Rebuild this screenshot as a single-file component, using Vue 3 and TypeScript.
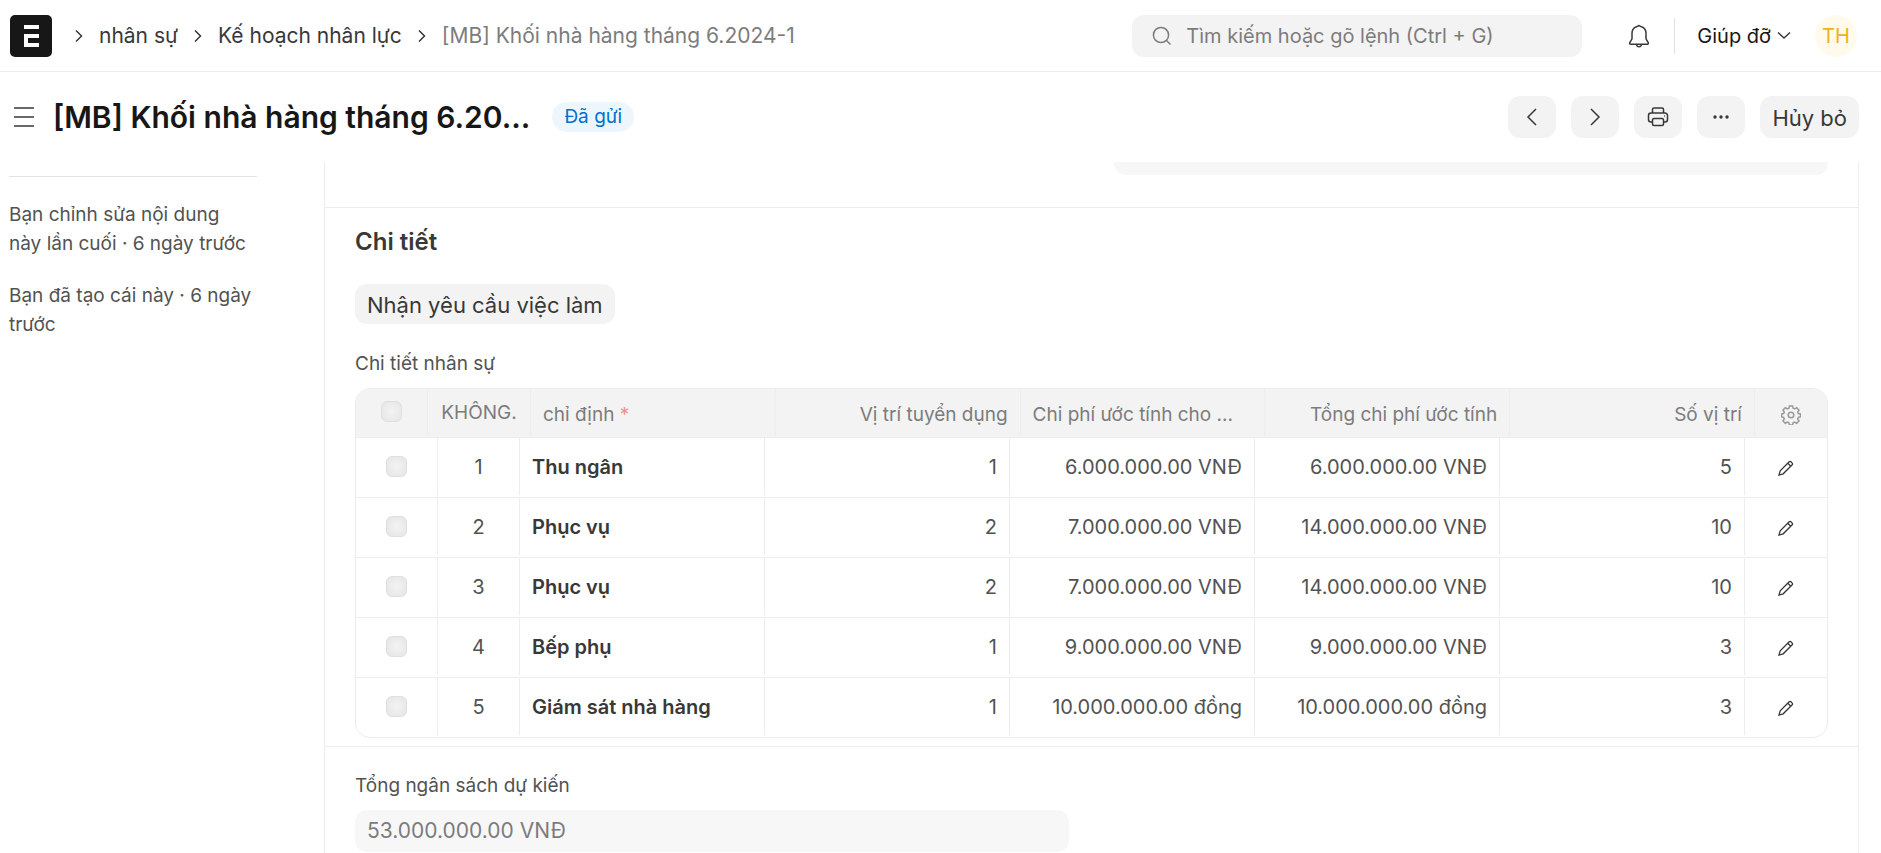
<script setup lang="ts">
interface Row {
  name: string
  vacancies: number
  cost: string
  total: string
  positions: number
}

const rows: Row[] = [
  { name: 'Thu ngân', vacancies: 1, cost: '6.000.000.00 VNĐ', total: '6.000.000.00 VNĐ', positions: 5 },
  { name: 'Phục vụ', vacancies: 2, cost: '7.000.000.00 VNĐ', total: '14.000.000.00 VNĐ', positions: 10 },
  { name: 'Phục vụ', vacancies: 2, cost: '7.000.000.00 VNĐ', total: '14.000.000.00 VNĐ', positions: 10 },
  { name: 'Bếp phụ', vacancies: 1, cost: '9.000.000.00 VNĐ', total: '9.000.000.00 VNĐ', positions: 3 },
  { name: 'Giám sát nhà hàng', vacancies: 1, cost: '10.000.000.00 đồng', total: '10.000.000.00 đồng', positions: 3 },
]
</script>

<template>
  <div class="page">
    <header class="navbar">
      <a class="logo" href="#" aria-label="ERPNext">
        <svg width="42" height="42" viewBox="0 0 42 42">
          <rect width="42" height="42" rx="5" fill="#171717" />
          <path d="M14 10h15v4H14zM14 19h15v4H18v5h11v4H14z" fill="#fff" />
        </svg>
      </a>
      <nav class="crumbs" aria-label="Breadcrumb">
        <svg class="sep" width="8" height="14" viewBox="0 0 8 14"><path d="M1 1.500 6.500 7 1 12.500" /></svg>
        <a href="#">nhân sự</a>
        <svg class="sep" width="8" height="14" viewBox="0 0 8 14"><path d="M1 1.500 6.500 7 1 12.500" /></svg>
        <a href="#">Kế hoạch nhân lực</a>
        <svg class="sep" width="8" height="14" viewBox="0 0 8 14"><path d="M1 1.500 6.500 7 1 12.500" /></svg>
        <a href="#" class="current">[MB] Khối nhà hàng tháng 6.2024-1</a>
      </nav>
      <div class="search">
        <svg width="20" height="20" viewBox="0 0 20 20"><circle cx="9" cy="9" r="7.600" /><path d="m14.500 14.500 4 4" /></svg>
        <input type="text" aria-label="Tìm kiếm" placeholder="Tìm kiếm hoặc gõ lệnh (Ctrl + G)" />
      </div>
      <button class="plain bell" aria-label="Thông báo">
        <svg width="24" height="26" viewBox="0 0 24 26">
          <path d="M12 2.500 9.500 3.800C6.500 4.800 5 7.200 5 10.500v5.300L2.800 19.600q-.6 1.600 1 1.600h16.400q1.600 0 1-1.600L19 15.800v-5.300c0-3.300-1.500-5.700-4.500-6.700Z" />
          <path d="M9.500 21.500c.5 3 4.500 3 5 0" />
        </svg>
      </button>
      <span class="divider"></span>
      <button class="plain help">
        Giúp đỡ
        <svg width="14" height="9" viewBox="0 0 14 9"><path d="m1 1.500 6 5.500 6-5.500" /></svg>
      </button>
      <button class="avatar">TH</button>
    </header>

    <div class="titlebar">
      <button class="plain menu" aria-label="Menu">
        <svg width="22" height="22" viewBox="0 0 22 22"><path d="M1 2h20M1 11h20M1 20h20" /></svg>
      </button>
      <h1>[MB] Khối nhà hàng tháng 6.20...</h1>
      <span class="status">Đã gửi</span>
      <div class="actions">
        <button class="btn icon" aria-label="Trước"><svg width="24" height="24" viewBox="0 0 24 24"><path d="m16 4-8 8 8 8" /></svg></button>
        <button class="btn icon" aria-label="Sau"><svg width="24" height="24" viewBox="0 0 24 24"><path d="m8 4 8 8-8 8" /></svg></button>
        <button class="btn icon" aria-label="In">
          <svg width="24" height="24" viewBox="0 0 24 24">
            <path d="M6.500 8V4.500a1.500 1.500 0 0 1 1.500-1.500h8a1.500 1.500 0 0 1 1.500 1.500V8M6.500 17H5a2.500 2.500 0 0 1-2.500-2.500v-4A2.500 2.500 0 0 1 5 8h14a2.500 2.500 0 0 1 2.500 2.500v4A2.500 2.500 0 0 1 19 17h-1.500" />
            <rect x="6.500" y="13.500" width="11" height="7" rx="1.500" /><path d="M18 11h.8" />
          </svg>
        </button>
        <button class="btn icon" aria-label="Thêm">
          <svg width="24" height="24" viewBox="0 0 24 24"><g class="dots"><circle cx="6" cy="12" r="1.700" /><circle cx="12" cy="12" r="1.700" /><circle cx="18" cy="12" r="1.700" /></g></svg>
        </button>
        <button class="btn text">Hủy bỏ</button>
      </div>
    </div>

    <div class="body">
      <aside>
        <hr />
        <p>Bạn chỉnh sửa nội dung này lần cuối · 6 ngày trước</p>
        <p>Bạn đã tạo cái này · 6 ngày trước</p>
      </aside>
      <main>
        <section class="cut"><div class="cut-field"></div></section>
        <section class="details">
          <h2>Chi tiết</h2>
          <button class="btn text get">Nhận yêu cầu việc làm</button>
          <div class="label" id="grid-label">Chi tiết nhân sự</div>
          <table aria-labelledby="grid-label">
            <thead>
              <tr>
                <th class="check"><input type="checkbox" aria-label="Chọn tất cả" /></th>
                <th class="no">KHÔNG.</th>
                <th>chỉ định <span class="req">*</span></th>
                <th class="num">Vị trí tuyển dụng</th>
                <th>Chi phí ước tính cho ...</th>
                <th class="num">Tổng chi phí ước tính</th>
                <th class="num">Số vị trí</th>
                <th class="tool">
                  <button class="plain" aria-label="Cấu hình cột">
                    <svg class="gear" width="20" height="20" viewBox="0 0 20 20">
                      <path d="M8.400 1h3.200l.5 2.300 1.600.7 2-1.300 2.300 2.300-1.300 2 .7 1.500 2.100.5v2.800l-2.100.6-.7 1.600 1.300 2-2.300 2.300-2-1.300-1.600.7-.5 2.300H8.400l-.5-2.300-1.600-.7-2 1.300L2 16l1.300-2-.7-1.600L.500 11.800V9l2.100-.5L3.300 7 2 5l2.300-2.300 2 1.300 1.600-.7Z" />
                      <circle cx="10" cy="10" r="2.800" />
                    </svg>
                  </button>
                </th>
              </tr>
            </thead>
            <tbody>
              <tr v-for="(row, i) in rows" :key="i">
                <td class="check"><input type="checkbox" :aria-label="`Chọn dòng ${i + 1}`" /></td>
                <td class="no">{{ i + 1 }}</td>
                <td class="name">{{ row.name }}</td>
                <td class="num">{{ row.vacancies }}</td>
                <td class="num">{{ row.cost }}</td>
                <td class="num">{{ row.total }}</td>
                <td class="num">{{ row.positions }}</td>
                <td class="tool">
                  <button class="plain" :aria-label="`Sửa dòng ${i + 1}`">
                    <svg class="pencil" width="16" height="16" viewBox="0 0 16 16">
                      <path d="M1 15 2.200 10.800 11.200 1.800a1.200 1.200 0 0 1 1.700 0l1.300 1.300a1.200 1.200 0 0 1 0 1.700L5.200 13.800ZM9.800 3.200l3 3" />
                    </svg>
                  </button>
                </td>
              </tr>
            </tbody>
          </table>
        </section>
        <section class="budget">
          <label class="label" for="budget">Tổng ngân sách dự kiến</label>
          <input id="budget" type="text" readonly value="53.000.000.00 VNĐ" />
        </section>
      </main>
    </div>
  </div>
</template>

<style>
body {
  margin: 0;
  background: #fff;
}
</style>

<style scoped>
* {
  box-sizing: border-box;
}
.page {
  height: 100vh;
  display: flex;
  flex-direction: column;
  overflow: hidden;
  font-family: Inter, "Noto Sans", sans-serif;
  font-size: 20px;
  line-height: 28px;
  color: #383838;
}
button,
input {
  font: inherit;
  color: inherit;
  border: 0;
  margin: 0;
}
button {
  cursor: pointer;
}
a {
  color: inherit;
  text-decoration: none;
}
svg {
  display: block;
  fill: none;
  stroke: #383838;
  stroke-width: 1.5;
}
.logo svg {
  stroke: none;
}
.plain {
  background: none;
  padding: 0;
}
.navbar {
  display: flex;
  align-items: center;
  flex: none;
  height: 72px;
  padding: 0 24px 0 10px;
  border-bottom: 1px solid #ededed;
}
.crumbs {
  display: flex;
  align-items: center;
  gap: 16px;
  margin: 0 auto 0 23px;
  font-size: 21px;
}
.current {
  color: #7c7c7c;
}
.search {
  display: flex;
  align-items: center;
  gap: 14px;
  width: 450px;
  height: 42px;
  padding: 0 20px;
  border-radius: 12px;
  background: #f3f3f3;
}
.search svg {
  stroke: #7c7c7c;
}
.search input {
  flex: 1;
  min-width: 0;
  padding: 0;
  background: none;
  outline: none;
}
.search input::placeholder {
  color: #7c7c7c;
  opacity: 1;
}
.bell {
  margin-left: 45px;
}
.divider {
  width: 1px;
  height: 36px;
  margin: 0 22px 0 23px;
  background: #e2e2e2;
}
.help {
  display: flex;
  align-items: center;
  gap: 6px;
  color: #171717;
}
.avatar {
  width: 42px;
  height: 42px;
  margin-left: 24px;
  padding: 0;
  border-radius: 50%;
  background: #fffaeb;
  color: #edb21d;
}
.titlebar {
  display: flex;
  align-items: center;
  flex: none;
  height: 90px;
  padding: 0 22px 0 13px;
}
h1 {
  min-width: 474px;
  margin: 0 22px 0 18px;
  white-space: nowrap;
  font-size: 30px;
  line-height: 40px;
  font-weight: 600;
  color: #171717;
}
.status {
  padding: 0 12px;
  height: 30px;
  border-radius: 15px;
  background: #edf6fd;
  color: #0070cc;
  font-size: 19px;
  line-height: 30px;
}
.actions {
  display: flex;
  gap: 15px;
  margin-left: auto;
}
.btn {
  height: 42px;
  padding: 0 12px;
  border-radius: 12px;
  background: #f3f3f3;
  font-size: 22px;
}
.btn.text {
  padding-top: 2px;
}
.dots {
  fill: #383838;
  stroke: none;
}
.body {
  flex: 1;
  min-height: 0;
  display: flex;
  padding-right: 22px;
}
aside {
  width: 324px;
  flex: none;
  padding: 14px 67px 0 9px;
  font-size: 19px;
  line-height: 29px;
  color: #525252;
}
hr {
  margin: 0 0 23px;
  border: 0;
  border-top: 1px solid #e2e2e2;
}
aside p {
  margin: 0 0 23px;
  padding-right: 4px;
}
main {
  flex: 1;
  min-width: 0;
  overflow: hidden;
  border: solid #ededed;
  border-width: 0 1px;
}
section {
  padding: 0 30px;
  border-bottom: 1px solid #ededed;
}
.cut {
  height: 46px;
}
.cut-field {
  width: 714px;
  height: 13px;
  margin-left: auto;
  border-radius: 0 0 12px 12px;
  background: #f7f7f7;
}
.details {
  padding-top: 18px;
  padding-bottom: 8px;
}
h2 {
  margin: 0 0 26px;
  font-size: 24px;
  line-height: 32px;
  font-weight: 600;
}
.get {
  display: block;
  height: 40px;
  margin-bottom: 26px;
}
.label {
  display: block;
  margin-bottom: 10px;
  font-size: 19px;
  color: #525252;
}
table {
  display: block;
  overflow: hidden;
  border: 1px solid #ededed;
  border-radius: 15px;
  color: #525252;
}
thead,
tbody {
  display: block;
}
tr {
  display: flex;
}
thead {
  background: #f3f3f3;
  color: #7c7c7c;
  font-size: 19px;
}
thead tr {
  height: 48px;
}
tbody tr {
  height: 60px;
  padding-bottom: 2px;
  border-top: 1px solid #ededed;
}
th,
td {
  flex: 1 1 0;
  min-width: 0;
  padding: 12px 12px 0;
  border-right: 1px solid #ededed;
  font-weight: 400;
  text-align: left;
  white-space: nowrap;
}
td {
  padding-top: 15px;
}
.check,
.no,
.tool {
  display: flex;
  flex: none;
  justify-content: center;
}
td.check,
td.no,
td.tool {
  width: 82px;
}
th.check,
th.tool {
  width: 72px;
}
th.no {
  width: 103px;
  padding-top: 10px;
}
.tool {
  border-right: 0;
}
.num {
  text-align: right;
}
.name {
  font-weight: 600;
  color: #383838;
}
.req {
  color: #f09090;
}
.tool button {
  height: 28px;
}
td.tool {
  padding-top: 16px;
}
.gear {
  stroke: #999;
}
.pencil {
  stroke-width: 1.3;
}
input[type="checkbox"] {
  appearance: none;
  width: 21px;
  height: 21px;
  border: 1px solid #dfdfdf;
  border-radius: 6px;
  background: radial-gradient(#f3f3f3, #e5e5e5);
}
td input[type="checkbox"] {
  margin-top: 3px;
}
.budget {
  padding-top: 25px;
  border-bottom: 0;
}
.budget input {
  display: block;
  width: 714px;
  height: 42px;
  padding: 0 12px 2px;
  border-radius: 12px;
  background: #f7f7f7;
  color: #7c7c7c;
  font-size: 21px;
}
</style>
